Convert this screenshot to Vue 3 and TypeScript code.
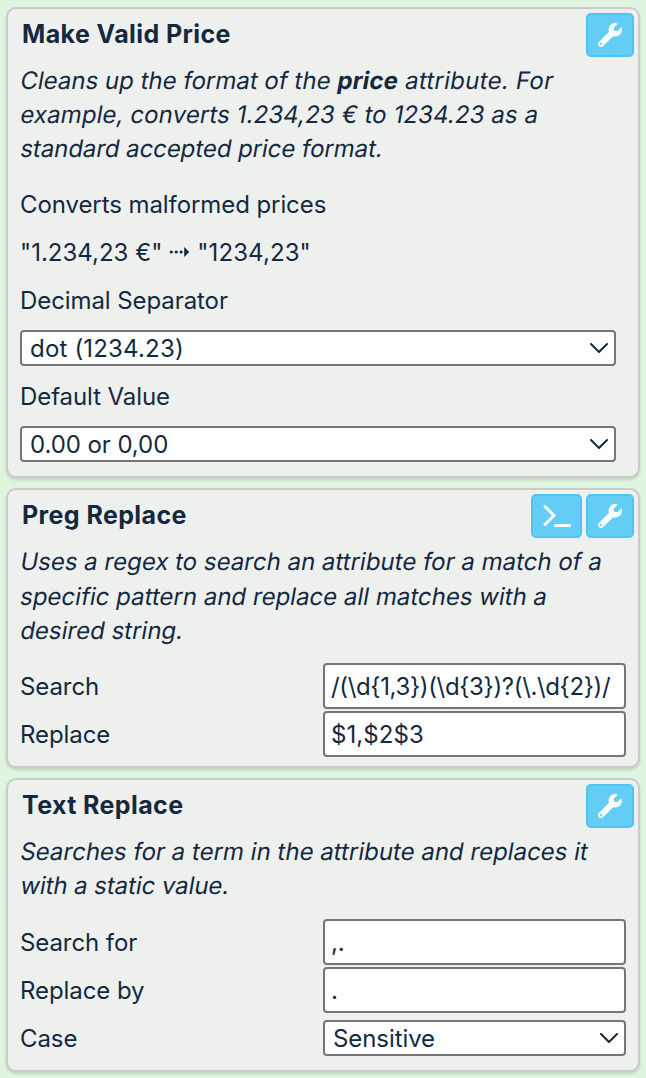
<script setup lang="ts">
import { ref } from 'vue'

const decimalSeparator = ref('dot (1234.23)')
const defaultValue = ref('0.00 or 0,00')
const pattern = ref('/(\\d{1,3})(\\d{3})?(\\.\\d{2})/')
const replacement = ref('$1,$2$3')
const searchFor = ref(',.')
const replaceBy = ref('.')
const caseMode = ref('Sensitive')

const wrench =
  'M507.73 109.1c-2.24-9.03-13.54-12.09-20.12-5.51l-74.36 74.36-67.88-11.31-11.31-67.88 74.36-74.36c6.62-6.62 3.43-17.9-5.66-20.16-47.38-11.74-99.55.91-136.58 37.93-39.64 39.64-50.55 97.1-34.05 147.2L18.74 402.76c-24.99 24.99-24.99 65.51 0 90.5 24.99 24.99 65.51 24.99 90.5 0l213.21-213.21c50.12 16.71 107.47 5.68 147.37-34.22 37.07-37.07 49.7-89.32 37.91-136.73zM64 472c-13.25 0-24-10.75-24-24 0-13.26 10.75-24 24-24s24 10.74 24 24c0 13.25-10.75 24-24 24z'
</script>

<template>
  <main class="list">
    <section class="card">
      <header class="head">
        <h2>Make Valid Price</h2>
        <button class="btn" type="button" aria-label="Settings">
          <svg class="wrench" viewBox="0 0 512 512"><path :d="wrench" /></svg>
        </button>
      </header>
      <p class="desc price-desc">
        <span class="line even">Cleans up the format of the <b>price</b><span class="loose"> attribute. For</span></span>
        <span class="line wider">example, converts 1.234,23 € to 1234.23 as a</span>
        <span class="line">standard accepted price format.</span>
      </p>
      <div class="row">Converts malformed prices</div>
      <div class="row">
        <span class="even">"1.234,23 €"</span>
        <svg class="arrow" viewBox="0 0 21 12" aria-label="to">
          <circle cx="2.3" cy="6" r="1.6" /><circle cx="7.2" cy="6" r="1.6" /><circle cx="12.1" cy="6" r="1.6" />
          <path d="M15.2 1v10L20.3 6z" />
        </svg>
        <span class="wider">"1234,23"</span>
      </div>
      <div class="row">Decimal Separator</div>
      <div class="row">
        <div class="select wide">
          <select v-model="decimalSeparator" class="wider"><option>dot (1234.23)</option></select>
          <svg class="chevron" viewBox="0 0 18 11"><path d="M1 1l8 8 8-8" /></svg>
        </div>
      </div>
      <div class="row">Default Value</div>
      <div class="row">
        <div class="select wide">
          <select v-model="defaultValue"><option>0.00 or 0,00</option></select>
          <svg class="chevron" viewBox="0 0 18 11"><path d="M1 1l8 8 8-8" /></svg>
        </div>
      </div>
    </section>

    <section class="card">
      <header class="head">
        <h2>Preg Replace</h2>
        <button class="btn console" type="button" aria-label="Console">
          <svg class="terminal" viewBox="0 0 28 24"><path d="M2 2.5l9 9-9 9M12.5 21.5h14" /></svg>
        </button>
        <button class="btn" type="button" aria-label="Settings">
          <svg class="wrench" viewBox="0 0 512 512"><path :d="wrench" /></svg>
        </button>
      </header>
      <p class="desc regex-desc">
        <span class="line even">Uses a regex to search an attribute for a match of a</span>
        <span class="line even">specific pattern and replace all matches with a</span>
        <span class="line even">desired string.</span>
      </p>
      <label class="row"><span class="name">Search</span><input v-model="pattern" class="regex" type="text" /></label>
      <label class="row"><span class="name">Replace</span><input v-model="replacement" class="even" type="text" /></label>
    </section>

    <section class="card">
      <header class="head">
        <h2>Text Replace</h2>
        <button class="btn" type="button" aria-label="Settings">
          <svg class="wrench" viewBox="0 0 512 512"><path :d="wrench" /></svg>
        </button>
      </header>
      <p class="desc text-desc">
        <span class="line even">Searches for a term in the attribute and replaces it</span>
        <span class="line">with a static value.</span>
      </p>
      <label class="row"><span class="name">Search for</span><input v-model="searchFor" type="text" /></label>
      <label class="row"><span class="name">Replace by</span><input v-model="replaceBy" type="text" /></label>
      <div class="row">
        <span class="name">Case</span>
        <div class="select">
          <select v-model="caseMode"><option>Sensitive</option></select>
          <svg class="chevron" viewBox="0 0 18 11"><path d="M1 1l8 8 8-8" /></svg>
        </div>
      </div>
    </section>
  </main>
</template>

<style>
body {
  margin: 0;
  background: #dff5df;
}
</style>

<style scoped>
.list {
  box-sizing: border-box;
  min-height: 1078px;
  padding: 7px 6px 6px;
  display: flex;
  flex-direction: column;
  gap: 10px;
  background: #dff5df;
  color: #14293f;
  font: 400 24px/34px Inter, 'Liberation Sans', sans-serif;
  letter-spacing: -0.08px;
  white-space: nowrap;
}
.card {
  box-sizing: border-box;
  border: 2px solid #c9cccb;
  border-radius: 10px;
  background: #eef0ed;
  padding: 0 12px 7px;
  box-shadow: 0 2px 3px rgba(0, 0, 0, 0.14);
}
.head {
  display: flex;
  align-items: flex-start;
  gap: 4px;
  height: 55px;
  margin-right: -8px;
}
h2 {
  flex: 1;
  margin: 8px 0 0 2px;
  font-size: 25px;
  line-height: 34px;
  font-weight: 700;
  letter-spacing: 0.4px;
}
.btn {
  box-sizing: border-box;
  display: flex;
  align-items: center;
  justify-content: center;
  width: 48px;
  height: 44px;
  margin-top: 4px;
  padding: 0;
  border: 2px solid #4fc3f3;
  border-radius: 5px;
  background: #64cdf5;
}
.console {
  width: 51px;
}
.wrench {
  width: 24px;
  height: 24px;
  fill: #fff;
}
.terminal {
  width: 28px;
  height: 24px;
  fill: none;
  stroke: #fff;
  stroke-width: 3;
  stroke-linecap: round;
  stroke-linejoin: round;
}
.desc {
  height: 103px;
  margin: 0 0 15px -1px;
}
.price-desc {
  margin-bottom: 14px;
}
.text-desc {
  height: 69px;
}
.line {
  display: block;
  transform: skewX(-10deg);
  transform-origin: 0 26px;
}
.regex-desc .line:nth-child(2) {
  padding-top: 1px;
}
.desc b {
  font-weight: 700;
  letter-spacing: 0.15px;
}
.even {
  letter-spacing: 0;
}
.wider {
  letter-spacing: 0.1px;
}
.loose {
  letter-spacing: 0.27px;
}
.row {
  display: flex;
  align-items: center;
  height: 48px;
}
.name {
  width: 303px;
  flex: none;
}
.arrow {
  width: 21px;
  height: 12px;
  margin: 0 7px 2px 7px;
  fill: #14293f;
}
input,
select {
  box-sizing: border-box;
  border: 2px solid #767676;
  border-radius: 4px;
  background: #fff;
  color: inherit;
  font: inherit;
  letter-spacing: inherit;
  outline: none;
}
input {
  width: 303px;
  height: 46px;
  margin: 0 0 2px;
  padding: 0 6px;
}
input.regex {
  letter-spacing: -0.36px;
}
input.even {
  letter-spacing: 0.1px;
}
select.wider {
  letter-spacing: 0.18px;
}
.select {
  position: relative;
  width: 303px;
  height: 36px;
  margin-bottom: 2px;
}
.select.wide {
  width: 596px;
}
select {
  display: block;
  width: 100%;
  height: 36px;
  margin: 0;
  padding: 2px 8px 0;
  line-height: 30px;
  appearance: none;
}
.chevron {
  position: absolute;
  right: 8px;
  top: 13px;
  width: 18px;
  height: 11px;
  fill: none;
  stroke: #14293f;
  stroke-width: 2;
  stroke-linecap: round;
  stroke-linejoin: round;
}
</style>
